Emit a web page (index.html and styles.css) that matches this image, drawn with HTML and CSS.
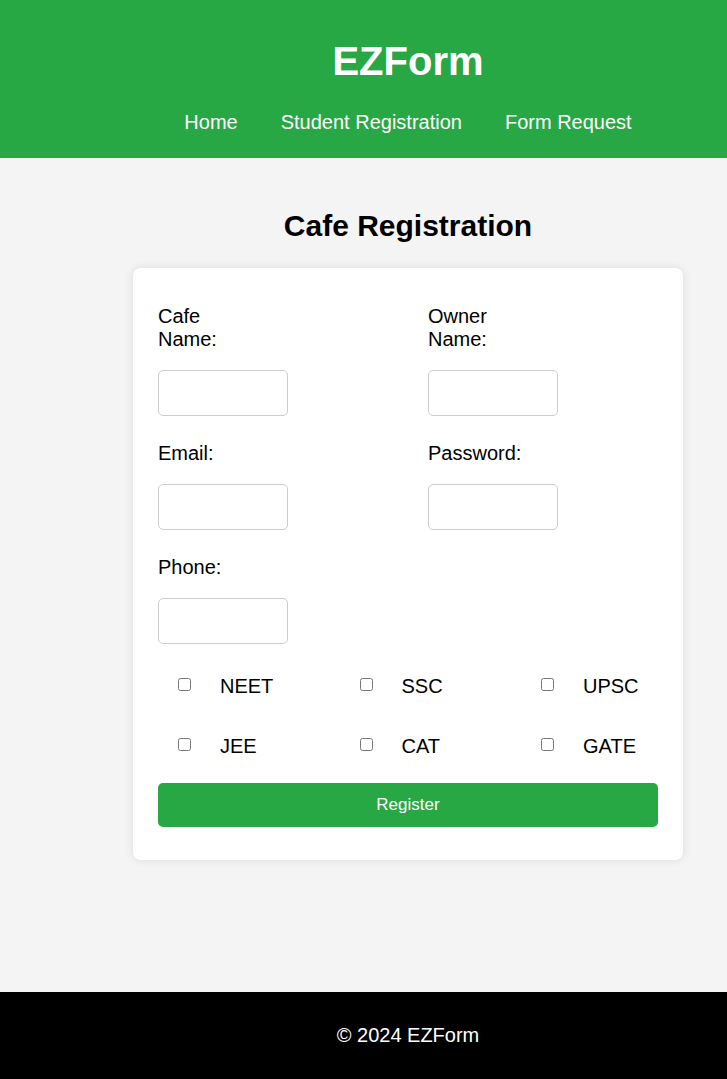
FILE: index.html
```html
<!DOCTYPE html>
<html lang="en">
<head>
<meta charset="utf-8">
<title>EZForm - Cafe Registration</title>
<link rel="stylesheet" href="styles.css">
</head>
<body>
<div class="page">
  <header class="site-header">
    <h1 class="brand">EZForm</h1>
    <nav class="nav">
      <a href="#">Home</a>
      <a href="#">Student Registration</a>
      <a href="#">Form Request</a>
    </nav>
  </header>
  <main class="main">
    <h2 class="title">Cafe Registration</h2>
    <form class="card">
      <div class="form-grid">
        <div class="field">
          <label class="label">Cafe Name:</label>
          <input class="input" type="text">
        </div>
        <div class="field">
          <label class="label">Owner Name:</label>
          <input class="input" type="text">
        </div>
        <div class="field">
          <label class="label">Email:</label>
          <input class="input" type="email">
        </div>
        <div class="field">
          <label class="label">Password:</label>
          <input class="input" type="password">
        </div>
        <div class="field">
          <label class="label">Phone:</label>
          <input class="input" type="tel">
        </div>
      </div>
      <div class="checks">
        <label class="check"><input type="checkbox" class="box"><span>NEET</span></label>
        <label class="check"><input type="checkbox" class="box"><span>SSC</span></label>
        <label class="check"><input type="checkbox" class="box"><span>UPSC</span></label>
        <label class="check"><input type="checkbox" class="box"><span>JEE</span></label>
        <label class="check"><input type="checkbox" class="box"><span>CAT</span></label>
        <label class="check"><input type="checkbox" class="box"><span>GATE</span></label>
      </div>
      <button type="button" class="btn">Register</button>
    </form>
  </main>
  <footer class="site-footer">
    <p>&copy; 2024 EZForm</p>
  </footer>
</div>
</body>
</html>
```

FILE: styles.css
```css
html, body {
  margin: 0;
  padding: 0;
}
body {
  font-family: "Liberation Sans", Arial, sans-serif;
  color: #000;
  background: #f4f4f4;
}
.page {
  min-height: 100vh;
  display: flex;
  flex-direction: column;
}
.site-header {
  background: #28a745;
  color: #fff;
  text-align: center;
  padding: 18px 0 24px 89px;
}
.brand {
  margin: 20px 0 27px;
  font-size: 40px;
  line-height: 46px;
  font-weight: bold;
}
.nav {
  display: flex;
  justify-content: center;
  gap: 43px;
  font-size: 20px;
  line-height: 23px;
}
.nav a {
  color: #fff;
  text-decoration: none;
}
.main {
  flex: 1;
  background: #f4f4f4;
  padding: 50px 0 0 89px;
  display: flex;
  flex-direction: column;
  align-items: center;
}
.title {
  margin: 0 0 25px;
  font-size: 30px;
  line-height: 35px;
  font-weight: bold;
}
.card {
  width: 550px;
  box-sizing: border-box;
  background: #fff;
  border-radius: 8px;
  box-shadow: 0 0 10px rgba(0, 0, 0, 0.1);
  padding: 37px 25px 33px;
}
.form-grid {
  display: grid;
  grid-template-columns: 250px 250px;
  column-gap: 20px;
  row-gap: 26px;
}
.field {
  display: flex;
  flex-direction: column;
  align-items: flex-start;
}
.label {
  display: block;
  width: 100px;
  font-size: 20px;
  line-height: 23px;
  margin-bottom: 19px;
}
.input {
  width: 130px;
  height: 46px;
  box-sizing: border-box;
  border: 1px solid #ccc;
  border-radius: 5px;
  padding: 10px;
  margin: 0;
  font-size: 16px;
  background: #fff;
}
.checks {
  display: grid;
  grid-template-columns: 166px 166px 1fr;
  column-gap: 15.5px;
  row-gap: 37px;
  margin-top: 31px;
}
.check {
  display: flex;
  align-items: flex-start;
  font-size: 20px;
  line-height: 23px;
}
.box {
  width: 13px;
  height: 13px;
  margin: 3px 29px 0 20px;
  flex: none;
}
.btn {
  display: block;
  width: 500px;
  height: 44px;
  margin-top: 25px;
  background: #28a745;
  color: #fff;
  border: none;
  border-radius: 5px;
  font-family: "Liberation Sans", Arial, sans-serif;
  font-size: 17px;
  cursor: pointer;
}
.site-footer {
  background: #000;
  color: #fff;
  height: 87px;
  padding-left: 89px;
  display: flex;
  align-items: center;
  justify-content: center;
}
.site-footer p {
  margin: 0;
  font-size: 20px;
  line-height: 23px;
}
```
